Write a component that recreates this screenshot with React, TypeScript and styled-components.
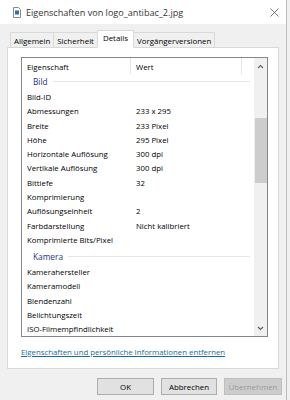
import React from 'react';
import styled, { createGlobalStyle } from 'styled-components';

const GlobalStyle = createGlobalStyle`
  html, body {
    margin: 0;
    padding: 0;
    background: #f0f0f0;
  }
  body {
    font-family: 'Segoe UI', 'Open Sans', sans-serif;
    color: #000;
  }
`;

const Window = styled.div`
  width: 287px;
  height: 400px;
  box-sizing: border-box;
  border-right: 1px solid #bcbcbc;
  background: #f0f0f0;
  display: flex;
  flex-direction: column;
  overflow: hidden;
`;

const TitleBar = styled.div`
  height: 24px;
  flex-shrink: 0;
  background: #fff;
  display: flex;
  align-items: center;
  padding-left: 13px;
`;

const TitleText = styled.span`
  margin-left: 5px;
  font-size: 9.1px;
  color: #333;
  white-space: nowrap;
`;

const CloseBtn = styled.div`
  margin-left: auto;
  margin-right: 7px;
  display: flex;
`;

const TabStrip = styled.div`
  display: flex;
  align-items: flex-end;
  height: 18px;
  margin-top: 5px;
  padding-left: 11px;
  position: relative;
  z-index: 1;
`;

const Tab = styled.div<{ $active?: boolean }>`
  box-sizing: border-box;
  height: ${(p) => (p.$active ? '18px' : '15px')};
  margin-left: -1px;
  padding: ${(p) => (p.$active ? '2px 5px 0' : '3px 3px 0')};
  border: 1px solid #d9d9d9;
  border-bottom: ${(p) => (p.$active ? '1px solid #fff' : 'none')};
  background: ${(p) => (p.$active ? '#fff' : '#f0f0f0')};
  font-size: 7.9px;
  line-height: 10px;
  white-space: nowrap;
  margin-bottom: ${(p) => (p.$active ? '-1px' : '0')};
`;

const Panel = styled.div`
  margin: 0 7px;
  height: 322px;
  box-sizing: border-box;
  background: #fff;
  border: 1px solid #d9d9d9;
  padding: 9px 10px 0 13px;
  display: flex;
  flex-direction: column;
`;

const ListView = styled.div`
  height: 280px;
  box-sizing: border-box;
  border: 1px solid #828790;
  display: flex;
  overflow: hidden;
`;

const ListBody = styled.div`
  flex: 1;
  display: flex;
  flex-direction: column;
  overflow: hidden;
`;

const HeaderRow = styled.div`
  height: 16px;
  display: flex;
  flex-shrink: 0;
`;

const HeaderCell = styled.div<{ $w: number }>`
  width: ${(p) => p.$w}px;
  box-sizing: border-box;
  padding: 4px 0 0 5px;
  font-size: 7.8px;
  line-height: 10px;
  border-right: 1px solid #e5e5e5;
`;

const GroupRow = styled.div<{ $first?: boolean }>`
  height: 16px;
  flex-shrink: 0;
  margin-top: ${(p) => (p.$first ? '0' : '2px')};
  display: flex;
  align-items: center;
  padding: 0 0 1px 11px;
  box-sizing: border-box;
  color: #1e3287;
  font-size: 8.3px;
  width: 228px;
`;

const GroupLine = styled.div`
  flex: 1;
  height: 1px;
  background: #e2e6ee;
  margin-left: 5px;
`;

const Row = styled.div`
  height: 14.27px;
  flex-shrink: 0;
  display: flex;
  align-items: center;
  font-size: 7.8px;
  white-space: nowrap;
`;

const Cell = styled.div<{ $w: number }>`
  width: ${(p) => p.$w}px;
  padding-left: 5px;
  box-sizing: border-box;
`;

const ScrollBar = styled.div`
  width: 13px;
  background: #f0f0f0;
  display: flex;
  flex-direction: column;
  align-items: center;
`;

const ScrollArrow = styled.div`
  height: 16px;
  display: flex;
  align-items: center;
  justify-content: center;
  flex-shrink: 0;
`;

const ScrollTrack = styled.div`
  flex: 1;
  width: 100%;
`;

const Thumb = styled.div`
  margin: 44px auto 0;
  width: 12px;
  height: 65px;
  background: #cdcdcd;
`;

const Link = styled.a`
  margin-top: 10px;
  font-size: 7.8px;
  color: #1a6b9e;
  text-decoration: underline;
  white-space: nowrap;
`;

const Footer = styled.div`
  display: flex;
  justify-content: flex-end;
  gap: 7px;
  margin-top: 9px;
  padding-right: 4px;
`;

const Button = styled.div<{ $w: number; $disabled?: boolean }>`
  width: ${(p) => p.$w}px;
  height: 17px;
  box-sizing: border-box;
  border: 1px solid ${(p) => (p.$disabled ? '#bfbfbf' : '#adadad')};
  background: ${(p) => (p.$disabled ? '#cccccc' : '#e1e1e1')};
  color: ${(p) => (p.$disabled ? '#9a9a9a' : '#000')};
  font-size: 7.9px;
  display: flex;
  align-items: center;
  justify-content: center;
`;

type Item = { name: string; value?: string };

const BILD: Item[] = [
  { name: 'Bild-ID' },
  { name: 'Abmessungen', value: '233 x 295' },
  { name: 'Breite', value: '233 Pixel' },
  { name: 'Höhe', value: '295 Pixel' },
  { name: 'Horizontale Auflösung', value: '300 dpi' },
  { name: 'Vertikale Auflösung', value: '300 dpi' },
  { name: 'Bittiefe', value: '32' },
  { name: 'Komprimierung' },
  { name: 'Auflösungseinheit', value: '2' },
  { name: 'Farbdarstellung', value: 'Nicht kalibriert' },
  { name: 'Komprimierte Bits/Pixel' },
];

const KAMERA: Item[] = [
  { name: 'Kamerahersteller' },
  { name: 'Kameramodell' },
  { name: 'Blendenzahl' },
  { name: 'Belichtungszeit' },
  { name: 'ISO-Filmempfindlichkeit' },
];

const FileIcon = () => (
  <svg width="8" height="11" viewBox="0 0 8 11">
    <path d="M0.5 0.5h5l2 2v8h-7z" fill="#fff" stroke="#8a8a8a" />
    <rect x="2" y="3.5" width="4" height="4" fill="#2a6db5" />
  </svg>
);

const CloseIcon = () => (
  <svg width="9" height="9" viewBox="0 0 9 9">
    <path d="M0.5 0.5l8 8M8.5 0.5l-8 8" stroke="#555" strokeWidth="0.8" />
  </svg>
);

const Chevron = ({ up }: { up?: boolean }) => (
  <svg width="7" height="5" viewBox="0 0 7 5">
    <path
      d={up ? 'M1 4L3.5 1.5L6 4' : 'M1 1L3.5 3.5L6 1'}
      fill="none"
      stroke="#606060"
      strokeWidth="1.1"
    />
  </svg>
);

const renderRows = (items: Item[]) =>
  items.map((it) => (
    <Row key={it.name}>
      <Cell $w={109}>{it.name}</Cell>
      <Cell $w={111}>{it.value}</Cell>
    </Row>
  ));

const App = () => (
  <>
    <GlobalStyle />
    <Window>
      <TitleBar>
        <FileIcon />
        <TitleText>Eigenschaften von logo_antibac_2.jpg</TitleText>
        <CloseBtn>
          <CloseIcon />
        </CloseBtn>
      </TitleBar>
      <TabStrip>
        <Tab>Allgemein</Tab>
        <Tab>Sicherheit</Tab>
        <Tab $active>Details</Tab>
        <Tab>Vorgängerversionen</Tab>
      </TabStrip>
      <Panel>
        <ListView>
          <ListBody>
            <HeaderRow>
              <HeaderCell $w={109}>Eigenschaft</HeaderCell>
              <HeaderCell $w={111}>Wert</HeaderCell>
            </HeaderRow>
            <GroupRow $first>
              Bild
              <GroupLine />
            </GroupRow>
            {renderRows(BILD)}
            <GroupRow>
              Kamera
              <GroupLine />
            </GroupRow>
            {renderRows(KAMERA)}
          </ListBody>
          <ScrollBar>
            <ScrollArrow>
              <Chevron up />
            </ScrollArrow>
            <ScrollTrack>
              <Thumb />
            </ScrollTrack>
            <ScrollArrow>
              <Chevron />
            </ScrollArrow>
          </ScrollBar>
        </ListView>
        <Link>Eigenschaften und persönliche Informationen entfernen</Link>
      </Panel>
      <Footer>
        <Button $w={57}>OK</Button>
        <Button $w={56}>Abbrechen</Button>
        <Button $w={58} $disabled>
          Übernehmen
        </Button>
      </Footer>
    </Window>
  </>
);

export default App;
